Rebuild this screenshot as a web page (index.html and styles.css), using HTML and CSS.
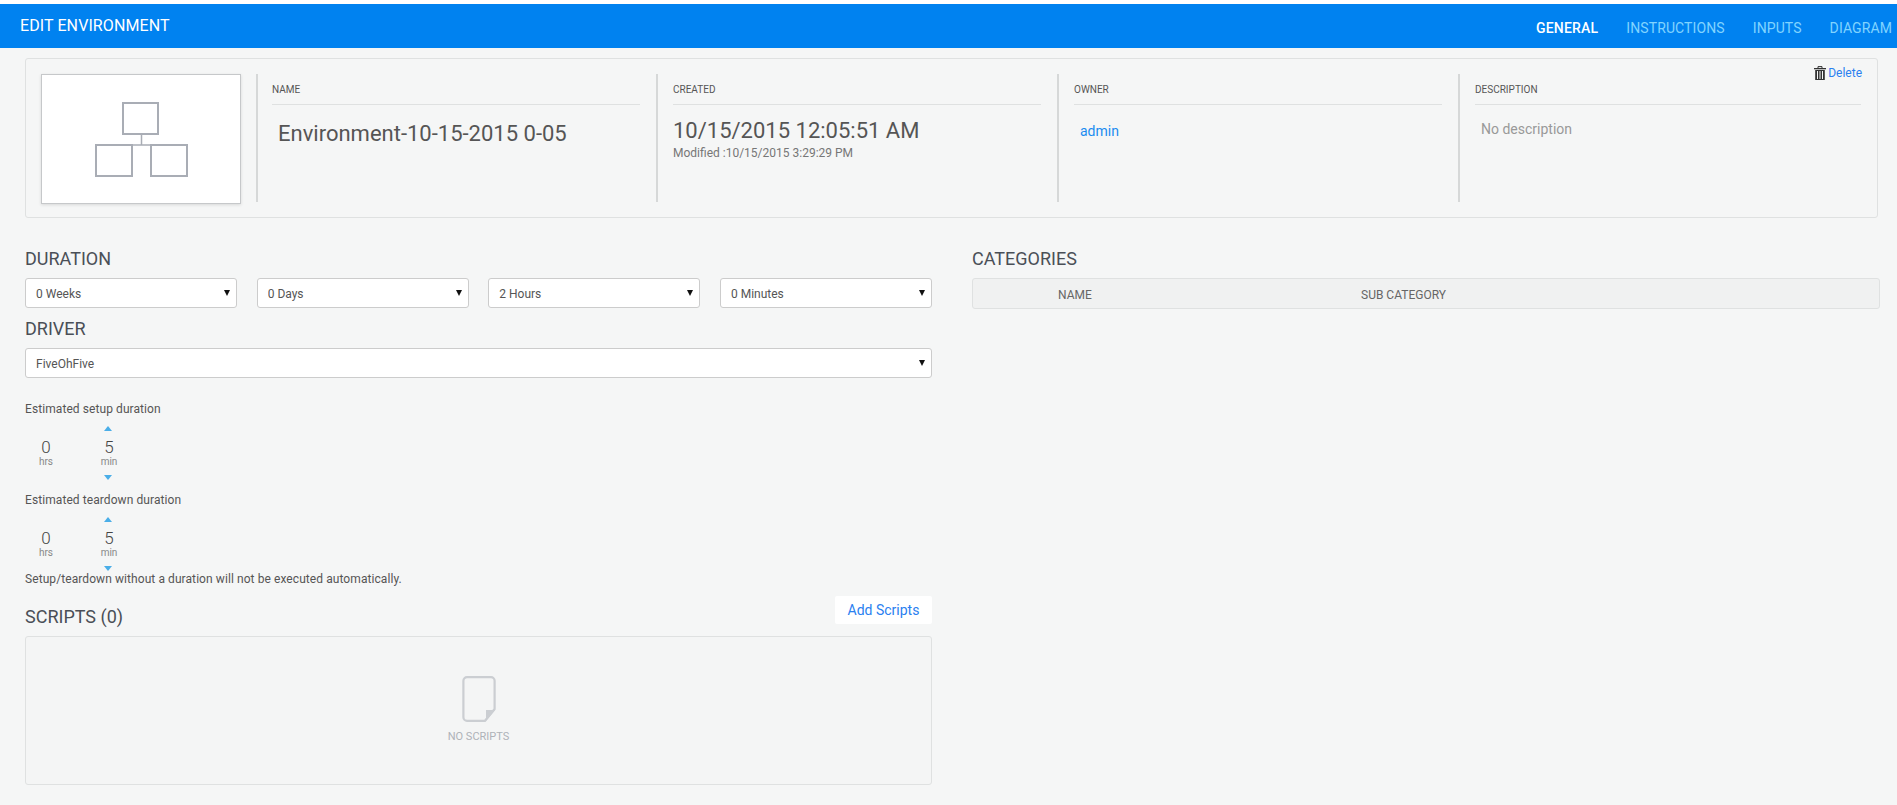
FILE: index.html
```html
<!DOCTYPE html>
<html lang="en">
  <head>
    <meta charset="UTF-8" />
    <title>Edit Environment</title>
    <link rel="stylesheet" href="styles.css">
  </head>
  <body>

    <div class="topbar">
      <h1 class="page-title">EDIT ENVIRONMENT</h1>
      <ul class="tabs">
        <li><a class="active" href="#">GENERAL</a></li>
        <li><a href="#">INSTRUCTIONS</a></li>
        <li><a href="#">INPUTS</a></li>
        <li><a href="#">DIAGRAM</a></li>
      </ul>
    </div>

    <div class="summary">
      <a class="delete-link" href="#">
        <svg width="12" height="14" viewBox="0 0 12 14">
          <path d="M4 2V.6h4V2" fill="none" stroke="#333" stroke-width="1"/>
          <rect x="0" y="2" width="12" height="1.3" fill="#333"/>
          <path d="M1.2 4h9.6v10H1.2zM3 5v8h1V5zM5.5 5v8h1V5zM8 5v8h1V5z" fill="#333" fill-rule="evenodd"/>
        </svg>
        Delete
      </a>
      <div class="thumb">
        <svg width="94" height="76" viewBox="0 0 94 76">
          <g fill="none" stroke="#a9adb5" stroke-width="2">
            <rect x="28" y="2" width="35" height="31"/>
            <rect x="1" y="44" width="36" height="31"/>
            <rect x="56" y="44" width="36" height="31"/>
            <path d="M46.5 33v11M37 44h19" stroke-width="1.5"/>
          </g>
        </svg>
      </div>
      <div class="info-cols">
        <div class="info-col">
          <div class="info-label">NAME</div>
          <div class="env-name">Environment-10-15-2015 0-05</div>
        </div>
        <div class="info-col">
          <div class="info-label">CREATED</div>
          <div class="created">10/15/2015 12:05:51 AM</div>
          <div class="modified">Modified :10/15/2015 3:29:29 PM</div>
        </div>
        <div class="info-col">
          <div class="info-label">OWNER</div>
          <div class="owner"><a href="#">admin</a></div>
        </div>
        <div class="info-col">
          <div class="info-label">DESCRIPTION</div>
          <div class="no-desc">No description</div>
        </div>
      </div>
    </div>

    <div class="content">
      <div class="left-col">
        <h2 class="section-title">DURATION</h2>
        <div class="duration-row">
          <div class="select-wrap"><select><option>0 Weeks</option></select></div>
          <div class="select-wrap"><select><option>0 Days</option></select></div>
          <div class="select-wrap"><select><option>2 Hours</option></select></div>
          <div class="select-wrap"><select><option>0 Minutes</option></select></div>
        </div>
        <h2 class="section-title driver-title">DRIVER</h2>
        <div class="select-wrap"><select><option>FiveOhFive</option></select></div>

        <div class="est-label first">Estimated setup duration</div>
        <div class="spinners">
          <div class="spin hrs"><span class="num">0</span><span class="unit">hrs</span></div>
          <div class="spin mins">
            <span class="arrow up"></span>
            <span class="num">5</span><span class="unit">min</span>
            <span class="arrow down"></span>
          </div>
        </div>

        <div class="est-label">Estimated teardown duration</div>
        <div class="spinners">
          <div class="spin hrs"><span class="num">0</span><span class="unit">hrs</span></div>
          <div class="spin mins">
            <span class="arrow up"></span>
            <span class="num">5</span><span class="unit">min</span>
            <span class="arrow down"></span>
          </div>
        </div>
        <div class="est-note">Setup/teardown without a duration will not be executed automatically.</div>

        <div class="scripts-head">
          <h2 class="section-title">SCRIPTS (0)</h2>
          <a class="add-btn" href="#">Add Scripts</a>
        </div>
        <div class="scripts-box">
          <svg width="34" height="46" viewBox="0 0 34 46">
            <path d="M5 1.2h24a3.6 3.6 0 0 1 3.6 3.6V33L23 44.8H5a3.6 3.6 0 0 1-3.6-3.6V4.800A3.6 3.6 0 0 1 5 1.2z" fill="none" stroke="#cbced2" stroke-width="2.2"/>
            <path d="M24 34h9L24 45z" fill="#cbced2"/>
          </svg>
          <div class="no-scripts">NO SCRIPTS</div>
        </div>
      </div>

      <div class="right-col">
        <h2 class="section-title">CATEGORIES</h2>
        <div class="cat-head">
          <span class="cat-name">NAME</span>
          <span class="cat-sub">SUB CATEGORY</span>
        </div>
      </div>
    </div>

  </body>
</html>
```

FILE: styles.css
```css
* {
  box-sizing: border-box;
  font-family: Roboto, "Liberation Sans", sans-serif;
}

html {
  background-color: #fff;
}

body {
  margin: 0;
  padding: 4px 0 0;
  height: 805px;
  overflow: hidden;
  background-color: #f5f6f6;
  background-clip: content-box;
  color: #555;
}

a {
  text-decoration: none;
}

/* top blue bar */
.topbar {
  display: flex;
  justify-content: space-between;
  height: 44px;
  background-color: #0082f0;
  padding: 0 5px 0 20px;
}

.page-title {
  margin: 0;
  font-size: 16px;
  font-weight: 400;
  letter-spacing: 0.1px;
  line-height: 44px;
  color: #fff;
}

.tabs {
  list-style: none;
  margin: 0;
  padding: 4px 0 0;
  display: flex;
  gap: 28px;
}

.tabs a {
  font-size: 14px;
  line-height: 40px;
  letter-spacing: 0.1px;
  color: #80d4ff;
}

.tabs a.active {
  color: #fff;
  font-weight: 500;
  letter-spacing: 0.2px;
}

/* summary card */
.summary {
  position: relative;
  display: flex;
  gap: 15px;
  margin: 10px 19px 0 25px;
  height: 160px;
  padding: 15px 16px 0 15px;
  border: 1px solid #dfe1e1;
  border-radius: 3px;
}

.delete-link {
  position: absolute;
  top: 7px;
  right: 15px;
  display: flex;
  align-items: center;
  gap: 2px;
  font-size: 12px;
  color: #2a80f0;
}

.thumb {
  width: 200px;
  height: 130px;
  padding-left: 2px;
  display: flex;
  align-items: center;
  justify-content: center;
  background-color: #fff;
  border: 1px solid #c6c8ca;
  box-shadow: 0 1px 3px rgba(0, 0, 0, 0.12);
}

.info-cols {
  flex: 1;
  display: grid;
  grid-template-columns: 400px 401px 401px 1fr;
}

.info-col {
  height: 128px;
  padding: 0 16px 0 15px;
  border-left: 2px solid #d6d8d8;
}

.info-col:first-child {
  padding-left: 14px;
}

.info-col:last-child {
  padding-right: 0;
}

.info-label {
  font-size: 10px;
  line-height: 12px;
  height: 31px;
  padding-top: 10px;
  color: #555;
  border-bottom: 1px solid #dfe1e1;
}

.env-name {
  margin: 17px 0 0 6px;
  font-size: 22px;
  line-height: 24px;
}

.created {
  margin-top: 14px;
  font-size: 22px;
  line-height: 24px;
}

.modified {
  margin-top: 2px;
  font-size: 12px;
  line-height: 16px;
  color: #777;
}

.owner {
  margin: 17px 0 0 6px;
  font-size: 14px;
  line-height: 18px;
}

.owner a {
  color: #1a8cf0;
}

.no-desc {
  margin: 15px 0 0 6px;
  font-size: 14px;
  line-height: 18px;
  color: #999;
}

/* main two columns */
.content {
  display: grid;
  grid-template-columns: 907px 908px;
  gap: 40px;
  margin: 0 0 0 25px;
}

.section-title {
  margin: 0;
  font-size: 18px;
  font-weight: 400;
  line-height: 22px;
  color: #4a4f57;
}

.left-col > .section-title:first-child,
.right-col > .section-title:first-child {
  margin-top: 30px;
}

.duration-row {
  display: grid;
  grid-template-columns: 212px 212px 212px 212px;
  justify-content: space-between;
  margin-top: 8px;
}

.driver-title {
  margin-top: 10px;
  margin-bottom: 8px;
}

.select-wrap {
  position: relative;
}

.select-wrap::after {
  content: "";
  position: absolute;
  top: 12px;
  right: 7px;
  border-left: 3.5px solid transparent;
  border-right: 3.5px solid transparent;
  border-top: 6px solid #111;
  pointer-events: none;
}

select {
  display: block;
  width: 100%;
  height: 30px;
  padding: 1px 10px 0;
  font-size: 12px;
  color: #555;
  background-color: #fff;
  border: 1px solid #ccc;
  border-radius: 3px;
  appearance: none;
}

.est-label,
.est-note {
  font-size: 12px;
  line-height: 16px;
  letter-spacing: 0.08px;
  color: #555;
}

.est-label {
  margin-top: 11px;
}

.est-label.first {
  margin-top: 23px;
}

.spinners {
  display: flex;
  height: 56px;
  margin-top: 8px;
}

.spin {
  position: relative;
  width: 34px;
  display: flex;
  flex-direction: column;
  align-items: center;
  padding-top: 12px;
}

.spin.hrs {
  margin-left: 4px;
}

.spin.mins {
  margin-left: 29px;
}

.num {
  font-size: 17px;
  font-weight: 300;
  line-height: 20px;
  color: #444;
}

.unit {
  margin-top: -1px;
  font-size: 10px;
  line-height: 12px;
  color: #888;
}

.arrow {
  position: absolute;
  left: 12px;
  border-left: 4px solid transparent;
  border-right: 4px solid transparent;
}

.arrow.up {
  top: 1px;
  border-bottom: 5px solid #4aaee8;
}

.arrow.down {
  top: 50px;
  border-top: 5px solid #4aaee8;
}

.est-note {
  margin-top: -1px;
}

.scripts-head {
  display: flex;
  justify-content: space-between;
  margin-top: 9px;
}

.scripts-head .section-title {
  margin-top: 10px;
}

.add-btn {
  width: 97px;
  height: 28px;
  text-align: center;
  font-size: 14px;
  line-height: 28px;
  color: #2a80f0;
  background-color: #fff;
  border-radius: 2px;
}

.scripts-box {
  height: 149px;
  margin-top: 8px;
  padding-top: 39px;
  display: flex;
  flex-direction: column;
  align-items: center;
  background-color: #f4f5f5;
  border: 1px solid #dfe1e1;
  border-radius: 3px;
}

.no-scripts {
  margin-top: 9px;
  font-size: 11px;
  line-height: 12px;
  color: #aeb2b8;
}

.cat-head {
  display: flex;
  height: 31px;
  margin-top: 8px;
  font-size: 12px;
  line-height: 33px;
  color: #666;
  background-color: #f0f1f1;
  border: 1px solid #dfe1e1;
  border-radius: 3px;
}

.cat-name {
  margin-left: 85px;
  width: 303px;
}
```
